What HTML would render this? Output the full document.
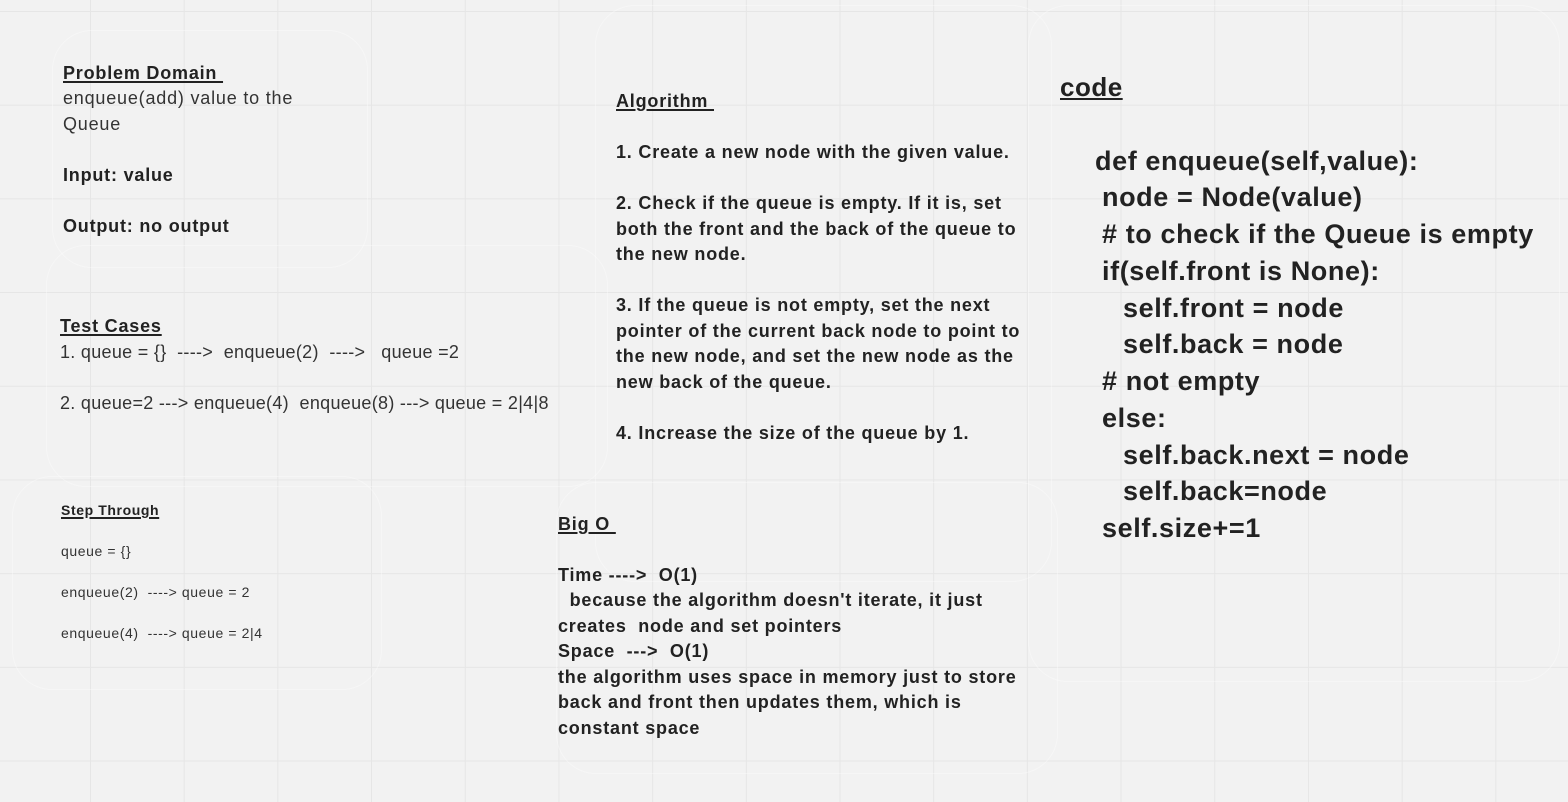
<!DOCTYPE html>
<html><head><meta charset="utf-8"><style>
html,body{margin:0;padding:0}
body{width:1568px;height:802px;overflow:hidden;position:relative;background-color:#f2f2f2;
background-image:linear-gradient(to right,#e6e6e6 1px,transparent 1px),linear-gradient(to bottom,#e6e6e6 1px,transparent 1px);
background-size:93.7px 93.7px;background-position:90px 11px;font-family:"Liberation Sans",sans-serif;color:#262626}
.l{position:absolute;white-space:pre;line-height:1}
.b{font-weight:bold;color:#222}
.u{text-decoration:underline;text-decoration-thickness:1.5px;text-underline-offset:2px}
.r{color:#333}
.card{position:absolute;border:1px solid rgba(255,255,255,0.35);border-radius:40px}
.s18{font-size:18px;letter-spacing:0.8px}
.s14{font-size:14px;letter-spacing:0.6px}
.c{font-size:27px;font-weight:bold;color:#222;letter-spacing:0.6px}
</style></head><body>
<div class="card" style="left:52px;top:30px;width:314px;height:236px"></div>
<div class="card" style="left:46px;top:245px;width:560px;height:240px"></div>
<div class="card" style="left:12px;top:476px;width:368px;height:212px"></div>
<div class="card" style="left:595px;top:5px;width:455px;height:575px"></div>
<div class="card" style="left:556px;top:482px;width:500px;height:290px"></div>
<div class="card" style="left:1028px;top:5px;width:530px;height:675px"></div>

<div class="l s18 b u" style="left:63px;top:64px">Problem Domain&nbsp;</div>
<div class="l s18 r" style="left:63px;top:89px">enqueue(add) value to the</div>
<div class="l s18 r" style="left:63px;top:115px">Queue</div>
<div class="l s18 b" style="left:63px;top:166px">Input: value</div>
<div class="l s18 b" style="left:63px;top:217px">Output: no output</div>

<div class="l s18 b u" style="left:60px;top:317px">Test Cases</div>
<div class="l s18 r" style="left:60px;top:343px;letter-spacing:0.3px">1. queue = {}  ----&gt;  enqueue(2)  ----&gt;   queue =2</div>
<div class="l s18 r" style="left:60px;top:394px;letter-spacing:0.3px">2. queue=2 ---&gt; enqueue(4)  enqueue(8) ---&gt; queue = 2|4|8</div>

<div class="l s14 b u" style="left:61px;top:503px">Step Through</div>
<div class="l s14 r" style="left:61px;top:544px">queue = {}</div>
<div class="l s14 r" style="left:61px;top:585px">enqueue(2)  ----&gt; queue = 2</div>
<div class="l s14 r" style="left:61px;top:626px">enqueue(4)  ----&gt; queue = 2|4</div>

<div class="l s18 b u" style="left:616px;top:92px">Algorithm&nbsp;</div>
<div class="l s18 b" style="left:616px;top:143px">1. Create a new node with the given value.</div>
<div class="l s18 b" style="left:616px;top:194px">2. Check if the queue is empty. If it is, set</div>
<div class="l s18 b" style="left:616px;top:220px">both the front and the back of the queue to</div>
<div class="l s18 b" style="left:616px;top:245px">the new node.</div>
<div class="l s18 b" style="left:616px;top:296px">3. If the queue is not empty, set the next</div>
<div class="l s18 b" style="left:616px;top:322px">pointer of the current back node to point to</div>
<div class="l s18 b" style="left:616px;top:347px">the new node, and set the new node as the</div>
<div class="l s18 b" style="left:616px;top:373px">new back of the queue.</div>
<div class="l s18 b" style="left:616px;top:424px">4. Increase the size of the queue by 1.</div>

<div class="l s18 b u" style="left:558px;top:515px">Big O&nbsp;</div>
<div class="l s18 b" style="left:558px;top:566px">Time ----&gt;  O(1)</div>
<div class="l s18 b" style="left:558px;top:591px">  because the algorithm doesn't iterate, it just</div>
<div class="l s18 b" style="left:558px;top:617px">creates  node and set pointers</div>
<div class="l s18 b" style="left:558px;top:642px">Space  ---&gt;  O(1)</div>
<div class="l s18 b" style="left:558px;top:668px">the algorithm uses space in memory just to store</div>
<div class="l s18 b" style="left:558px;top:693px">back and front then updates them, which is</div>
<div class="l s18 b" style="left:558px;top:719px">constant space</div>

<div class="l b u" style="left:1060px;top:74px;font-size:26px;letter-spacing:0.5px">code</div>
<div class="l c" style="left:1095px;top:148px">def enqueue(self,value):</div>
<div class="l c" style="left:1102px;top:184px">node = Node(value)</div>
<div class="l c" style="left:1102px;top:221px"># to check if the Queue is empty</div>
<div class="l c" style="left:1102px;top:258px">if(self.front is None):</div>
<div class="l c" style="left:1123px;top:295px">self.front = node</div>
<div class="l c" style="left:1123px;top:331px">self.back = node</div>
<div class="l c" style="left:1102px;top:368px"># not empty</div>
<div class="l c" style="left:1102px;top:405px">else:</div>
<div class="l c" style="left:1123px;top:442px">self.back.next = node</div>
<div class="l c" style="left:1123px;top:478px">self.back=node</div>
<div class="l c" style="left:1102px;top:515px">self.size+=1</div>
</body></html>
